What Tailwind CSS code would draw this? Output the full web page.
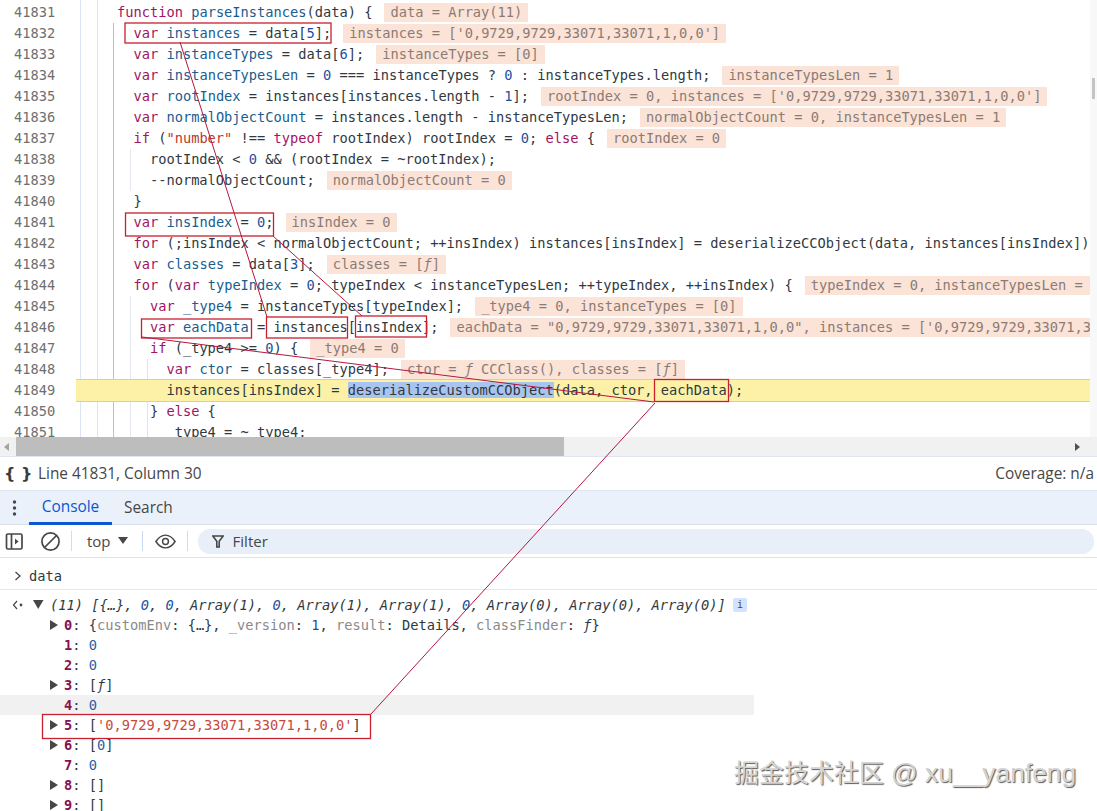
<!DOCTYPE html>
<html lang="en">
<head>
  <meta charset="UTF-8" />
  <title>DevTools Sources</title>
  <script src="https://cdn.jsdelivr.net/npm/@tailwindcss/browser@4"></script>
</head>
<body class="bg-white">
<div class="relative w-[1097px] h-[811px] overflow-hidden font-['Open_Sans','Noto_Sans',sans-serif]">

  <!-- Source pane -->
  <div class="relative h-[437px] overflow-hidden pr-[7px] pt-[2px] font-['DejaVu_Sans_Mono',monospace] text-[13.7px] text-[#303942]">
    <!-- indent guides -->
    <div class="absolute left-[80px] top-0 bottom-0 w-px bg-[#dbe5f5]"></div>
    <div class="absolute left-[97px] top-0 bottom-0 w-px bg-[#dbe5f5]"></div>
    <div class="absolute left-[113px] top-[23px] bottom-0 w-px bg-[#a9c2ea]"></div>
    <div class="absolute left-[130px] top-[149px] h-[42px] w-px bg-[#e3e8f0]"></div>
    <div class="absolute left-[130px] top-[296px] bottom-0 w-px bg-[#e3e8f0]"></div>
    <div class="absolute left-[147px] top-[359px] bottom-0 w-px bg-[#dbe5f5]"></div>

    <div class="relative flex h-[21px] leading-[21px]"><div class="w-[76px] shrink-0 pl-[14px] text-[#6f6f6f]">41831</div><div class="pl-[8px] whitespace-pre">    <span class="text-[#a1145f]">function</span> <span class="text-[#1a5d90]">parseInstances</span>(data) {<span class="inline-block ml-3 px-[6px] h-[19px] leading-[19px] bg-[#fce3d7] text-[#8b7b74]">data = Array(11)</span></div></div>
    <div class="relative flex h-[21px] leading-[21px]"><div class="w-[76px] shrink-0 pl-[14px] text-[#6f6f6f]">41832</div><div class="pl-[8px] whitespace-pre">      <span class="text-[#a1145f]">var</span> <span class="text-[#1a5d90]">instances</span> = data[<span class="text-[#1c4fa0]">5</span>];<span class="inline-block ml-3 px-[6px] h-[19px] leading-[19px] bg-[#fce3d7] text-[#8b7b74]">instances = ['0,9729,9729,33071,33071,1,0,0']</span></div></div>
    <div class="relative flex h-[21px] leading-[21px]"><div class="w-[76px] shrink-0 pl-[14px] text-[#6f6f6f]">41833</div><div class="pl-[8px] whitespace-pre">      <span class="text-[#a1145f]">var</span> <span class="text-[#1a5d90]">instanceTypes</span> = data[<span class="text-[#1c4fa0]">6</span>];<span class="inline-block ml-3 px-[6px] h-[19px] leading-[19px] bg-[#fce3d7] text-[#8b7b74]">instanceTypes = [0]</span></div></div>
    <div class="relative flex h-[21px] leading-[21px]"><div class="w-[76px] shrink-0 pl-[14px] text-[#6f6f6f]">41834</div><div class="pl-[8px] whitespace-pre">      <span class="text-[#a1145f]">var</span> <span class="text-[#1a5d90]">instanceTypesLen</span> = <span class="text-[#1c4fa0]">0</span> === instanceTypes ? <span class="text-[#1c4fa0]">0</span> : instanceTypes.length;<span class="inline-block ml-3 px-[6px] h-[19px] leading-[19px] bg-[#fce3d7] text-[#8b7b74]">instanceTypesLen = 1</span></div></div>
    <div class="relative flex h-[21px] leading-[21px]"><div class="w-[76px] shrink-0 pl-[14px] text-[#6f6f6f]">41835</div><div class="pl-[8px] whitespace-pre">      <span class="text-[#a1145f]">var</span> <span class="text-[#1a5d90]">rootIndex</span> = instances[instances.length - <span class="text-[#1c4fa0]">1</span>];<span class="inline-block ml-3 px-[6px] h-[19px] leading-[19px] bg-[#fce3d7] text-[#8b7b74]">rootIndex = 0, instances = ['0,9729,9729,33071,33071,1,0,0']</span></div></div>
    <div class="relative flex h-[21px] leading-[21px]"><div class="w-[76px] shrink-0 pl-[14px] text-[#6f6f6f]">41836</div><div class="pl-[8px] whitespace-pre">      <span class="text-[#a1145f]">var</span> <span class="text-[#1a5d90]">normalObjectCount</span> = instances.length - instanceTypesLen;<span class="inline-block ml-3 px-[6px] h-[19px] leading-[19px] bg-[#fce3d7] text-[#8b7b74]">normalObjectCount = 0, instanceTypesLen = 1</span></div></div>
    <div class="relative flex h-[21px] leading-[21px]"><div class="w-[76px] shrink-0 pl-[14px] text-[#6f6f6f]">41837</div><div class="pl-[8px] whitespace-pre">      <span class="text-[#a1145f]">if</span> (<span class="text-[#b93a2b]">"number"</span> !== <span class="text-[#a1145f]">typeof</span> rootIndex) rootIndex = <span class="text-[#1c4fa0]">0</span>; <span class="text-[#a1145f]">else</span> {<span class="inline-block ml-3 px-[6px] h-[19px] leading-[19px] bg-[#fce3d7] text-[#8b7b74]">rootIndex = 0</span></div></div>
    <div class="relative flex h-[21px] leading-[21px]"><div class="w-[76px] shrink-0 pl-[14px] text-[#6f6f6f]">41838</div><div class="pl-[8px] whitespace-pre">        rootIndex &lt; <span class="text-[#1c4fa0]">0</span> &amp;&amp; (rootIndex = ~rootIndex);</div></div>
    <div class="relative flex h-[21px] leading-[21px]"><div class="w-[76px] shrink-0 pl-[14px] text-[#6f6f6f]">41839</div><div class="pl-[8px] whitespace-pre">        --normalObjectCount;<span class="inline-block ml-3 px-[6px] h-[19px] leading-[19px] bg-[#fce3d7] text-[#8b7b74]">normalObjectCount = 0</span></div></div>
    <div class="relative flex h-[21px] leading-[21px]"><div class="w-[76px] shrink-0 pl-[14px] text-[#6f6f6f]">41840</div><div class="pl-[8px] whitespace-pre">      }</div></div>
    <div class="relative flex h-[21px] leading-[21px]"><div class="w-[76px] shrink-0 pl-[14px] text-[#6f6f6f]">41841</div><div class="pl-[8px] whitespace-pre">      <span class="text-[#a1145f]">var</span> <span class="text-[#1a5d90]">insIndex</span> = <span class="text-[#1c4fa0]">0</span>;<span class="inline-block ml-3 px-[6px] h-[19px] leading-[19px] bg-[#fce3d7] text-[#8b7b74]">insIndex = 0</span></div></div>
    <div class="relative flex h-[21px] leading-[21px]"><div class="w-[76px] shrink-0 pl-[14px] text-[#6f6f6f]">41842</div><div class="pl-[8px] whitespace-pre">      <span class="text-[#a1145f]">for</span> (;insIndex &lt; normalObjectCount; ++insIndex) instances[insIndex] = deserializeCCObject(data, instances[insIndex]);</div></div>
    <div class="relative flex h-[21px] leading-[21px]"><div class="w-[76px] shrink-0 pl-[14px] text-[#6f6f6f]">41843</div><div class="pl-[8px] whitespace-pre">      <span class="text-[#a1145f]">var</span> <span class="text-[#1a5d90]">classes</span> = data[<span class="text-[#1c4fa0]">3</span>];<span class="inline-block ml-3 px-[6px] h-[19px] leading-[19px] bg-[#fce3d7] text-[#8b7b74]">classes = [<i>ƒ</i>]</span></div></div>
    <div class="relative flex h-[21px] leading-[21px]"><div class="w-[76px] shrink-0 pl-[14px] text-[#6f6f6f]">41844</div><div class="pl-[8px] whitespace-pre">      <span class="text-[#a1145f]">for</span> (<span class="text-[#a1145f]">var</span> <span class="text-[#1a5d90]">typeIndex</span> = <span class="text-[#1c4fa0]">0</span>; typeIndex &lt; instanceTypesLen; ++typeIndex, ++insIndex) {<span class="inline-block ml-3 px-[6px] h-[19px] leading-[19px] bg-[#fce3d7] text-[#8b7b74]">typeIndex = 0, instanceTypesLen = 1</span></div></div>
    <div class="relative flex h-[21px] leading-[21px]"><div class="w-[76px] shrink-0 pl-[14px] text-[#6f6f6f]">41845</div><div class="pl-[8px] whitespace-pre">        <span class="text-[#a1145f]">var</span> <span class="text-[#1a5d90]">_type4</span> = instanceTypes[typeIndex];<span class="inline-block ml-3 px-[6px] h-[19px] leading-[19px] bg-[#fce3d7] text-[#8b7b74]">_type4 = 0, instanceTypes = [0]</span></div></div>
    <div class="relative flex h-[21px] leading-[21px]"><div class="w-[76px] shrink-0 pl-[14px] text-[#6f6f6f]">41846</div><div class="pl-[8px] whitespace-pre">        <span class="text-[#a1145f]">var</span> <span class="text-[#1a5d90]">eachData</span> = instances[insIndex];<span class="inline-block ml-3 px-[6px] h-[19px] leading-[19px] bg-[#fce3d7] text-[#8b7b74]">eachData = "0,9729,9729,33071,33071,1,0,0", instances = ['0,9729,9729,33071,33071,1,0,0']</span></div></div>
    <div class="relative flex h-[21px] leading-[21px]"><div class="w-[76px] shrink-0 pl-[14px] text-[#6f6f6f]">41847</div><div class="pl-[8px] whitespace-pre">        <span class="text-[#a1145f]">if</span> (_type4 &gt;= <span class="text-[#1c4fa0]">0</span>) {<span class="inline-block ml-3 px-[6px] h-[19px] leading-[19px] bg-[#fce3d7] text-[#8b7b74]">_type4 = 0</span></div></div>
    <div class="relative flex h-[21px] leading-[21px]"><div class="w-[76px] shrink-0 pl-[14px] text-[#6f6f6f]">41848</div><div class="pl-[8px] whitespace-pre">          <span class="text-[#a1145f]">var</span> <span class="text-[#1a5d90]">ctor</span> = classes[_type4];<span class="inline-block ml-3 px-[6px] h-[19px] leading-[19px] bg-[#fce3d7] text-[#8b7b74]">ctor = <i>ƒ</i> CCClass(), classes = [<i>ƒ</i>]</span></div></div>
    <div class="relative flex h-[21px] leading-[21px]"><div class="w-[76px] shrink-0 pl-[14px] text-[#6f6f6f]">41849</div><div class="flex-1 -mt-px h-[23px] pl-[8px] whitespace-pre bg-[#fdf1a8] border-y border-[#f3d34a]">          instances[insIndex] = <span class="bg-[#a9c5ef]">deserializeCustomCCObject</span>(data, ctor, eachData);</div></div>
    <div class="relative flex h-[21px] leading-[21px]"><div class="w-[76px] shrink-0 pl-[14px] text-[#6f6f6f]">41850</div><div class="pl-[8px] whitespace-pre">        } <span class="text-[#a1145f]">else</span> {</div></div>
    <div class="relative flex h-[21px] leading-[21px]"><div class="w-[76px] shrink-0 pl-[14px] text-[#6f6f6f]">41851</div><div class="pl-[8px] whitespace-pre">          _type4 = ~_type4;</div></div>

    <!-- vertical scrollbar -->
    <div class="absolute right-0 top-0 bottom-0 w-[7px] bg-[#f8f8f8]"></div>
    <div class="absolute right-[2px] top-[78px] h-[21px] w-[3px] bg-[#c4c4c4]"></div>
  </div>

  <!-- Horizontal scrollbar -->
  <div class="flex items-center h-[19px] bg-[#f1f1f1]">
    <svg class="ml-[2px] w-[14px] h-[18px]" viewBox="0 0 14 18"><path d="M7 5v8L2 9z" fill="#a3a3a3"/></svg>
    <div class="w-[548px] h-full bg-[#bdbdbd]"></div>
    <div class="flex-1"></div>
    <svg class="mr-[11px] w-[14px] h-[18px]" viewBox="0 0 14 18"><path d="M3 5v8l5-4z" fill="#505050"/></svg>
  </div>

  <!-- Status bar -->
  <div class="flex items-center h-[35px] border-y border-[#dfe5f1] text-[15.4px] text-[#474747]">
    <span class="ml-[4px] w-[34px] font-bold text-[#3c3c3c] text-[16px] font-['DejaVu_Sans',sans-serif]">{ }</span>
    <span>Line 41831, Column 30</span>
    <span class="ml-auto mr-[3px]">Coverage: n/a</span>
  </div>

  <!-- Drawer tabs -->
  <div class="flex h-[34px] bg-[#eaf1fa] border-b border-[#d9e0ec] text-[15.400px]">
    <svg class="w-[29px] h-[33px]" viewBox="0 0 29 33"><circle cx="14.500" cy="11" r="1.700" fill="#474747"/><circle cx="14.500" cy="17" r="1.700" fill="#474747"/><circle cx="14.500" cy="23" r="1.700" fill="#474747"/></svg>
    <div class="w-[83px] h-[34px] flex items-center justify-center text-[#0b57d0] border-b-[3px] border-[#0b57d0]">Console</div>
    <div class="ml-[12px] flex items-center text-[#474747]">Search</div>
  </div>

  <!-- Console toolbar -->
  <div class="flex items-center h-[33px] border-b border-[#dfe3ea] text-[15px] text-[#474747]">
    <svg class="ml-[5px] w-[19px] h-[19px]" viewBox="0 0 19 19" fill="none" stroke="#474747" stroke-width="1.700"><rect x="1.500" y="2" width="15.500" height="15" rx="1.500"/><path d="M6.500 2v15"/><path d="M10 6.500v6l3.500-3z" fill="#474747" stroke="none"/></svg>
    <svg class="ml-[16px] w-[21px] h-[21px]" viewBox="0 0 21 21" fill="none" stroke="#474747" stroke-width="1.700"><circle cx="10.500" cy="10.500" r="8.600"/><path d="M4.500 16.500l12-12"/></svg>
    <div class="ml-[10px] w-px h-[20px] bg-[#d5dbe5]"></div>
    <span class="ml-[15px]">top</span>
    <svg class="ml-[7px] w-[10px] h-[8px]" viewBox="0 0 10 8"><path d="M0 0h10L5 7z" fill="#474747"/></svg>
    <div class="ml-[14px] w-px h-[20px] bg-[#c7d9f3]"></div>
    <svg class="ml-[12px] w-[21px] h-[15px]" viewBox="0 0 23 16" fill="none" stroke="#474747" stroke-width="1.600"><path d="M1 8c3-4.600 6.500-7 10.500-7S19 3.400 22 8c-3 4.600-6.500 7-10.500 7S4 12.600 1 8z"/><circle cx="11.500" cy="8" r="3.200"/></svg>
    <div class="ml-[11px] w-px h-[20px] bg-[#d5dbe5]"></div>
    <div class="ml-[10px] flex items-center w-[896px] h-[25px] rounded-[12px] bg-[#e9eff8]">
      <svg class="ml-[14px] w-[12px] h-[13px]" viewBox="0 0 12 13" fill="none" stroke="#474747" stroke-width="1.600"><path d="M.8 1h10.400L7.200 6.200V12H4.800V6.200z"/></svg>
      <span class="ml-[9px]">Filter</span>
    </div>
  </div>

  <!-- Console output -->
  <div class="font-['DejaVu_Sans_Mono',monospace] text-[13.7px] leading-[20px] text-[#303942]">
    <div class="flex items-center h-[32px] pt-[5px] border-b border-[#e3e6ec] whitespace-pre">
      <svg class="ml-[14px] w-[8px] h-[10px]" viewBox="0 0 8 10" fill="none" stroke="#474747" stroke-width="1.300"><path d="M1.500 1l4.500 4-4.500 4"/></svg>
      <span class="ml-[7px]">data</span>
    </div>
    <div class="relative mt-[5px] h-[20px] whitespace-pre">
      <svg class="absolute left-[12px] top-[5px] w-[11px] h-[10px]" viewBox="0 0 11 10" fill="none" stroke="#474747" stroke-width="1.200"><path d="M5 1L1.500 5 5 9"/><circle cx="9" cy="5" r=".8" fill="#474747"/></svg>
      <svg class="absolute left-[33px] top-[5px] w-[11px] h-[9px]" viewBox="0 0 11 9"><path d="M0 0h10.500L5.200 9z" fill="#474747"/></svg>
      <span class="absolute left-[50px] top-0 italic">(11) [{…}, <span class="text-[#1c4fa0]">0</span>, <span class="text-[#1c4fa0]">0</span>, Array(1), <span class="text-[#1c4fa0]">0</span>, Array(1), Array(1), <span class="text-[#1c4fa0]">0</span>, Array(0), Array(0), Array(0)]</span>
      <span class="absolute left-[733px] top-[3px] w-[14px] h-[14px] rounded-[2px] bg-[#d3e3fd] text-[#474747] text-[10px] leading-[14px] text-center">i</span>
    </div>
    <div class="flex h-[20px] pl-[50px] whitespace-pre"><svg class="w-[8px] h-[20px] mr-[6px]" viewBox="0 0 8 20"><path d="M0 5l8 5-8 5z" fill="#474747"/></svg><span><b class="text-[#87104f]">0</b>: {<span class="text-[#8a8a8a]">customEnv</span>: {…}, <span class="text-[#8a8a8a]">_version</span>: <span class="text-[#1c4fa0]">1</span>, <span class="text-[#8a8a8a]">result</span>: Details, <span class="text-[#8a8a8a]">classFinder</span>: <i>ƒ</i>}</span></div>
    <div class="flex h-[20px] pl-[64px] whitespace-pre"><span><b class="text-[#87104f]">1</b>: <span class="text-[#1c5fa8]">0</span></span></div>
    <div class="flex h-[20px] pl-[64px] whitespace-pre"><span><b class="text-[#87104f]">2</b>: <span class="text-[#1c5fa8]">0</span></span></div>
    <div class="flex h-[20px] pl-[50px] whitespace-pre"><svg class="w-[8px] h-[20px] mr-[6px]" viewBox="0 0 8 20"><path d="M0 5l8 5-8 5z" fill="#474747"/></svg><span><b class="text-[#87104f]">3</b>: [<i>ƒ</i>]</span></div>
    <div class="flex h-[20px] w-[754px] pl-[64px] whitespace-pre bg-[#f1f1f1]"><span><b class="text-[#87104f]">4</b>: <span class="text-[#1c5fa8]">0</span></span></div>
    <div class="flex h-[20px] pl-[50px] whitespace-pre"><svg class="w-[8px] h-[20px] mr-[6px]" viewBox="0 0 8 20"><path d="M0 5l8 5-8 5z" fill="#474747"/></svg><span><b class="text-[#87104f]">5</b>: [<span class="text-[#c8483a]">'0,9729,9729,33071,33071,1,0,0'</span>]</span></div>
    <div class="flex h-[20px] pl-[50px] whitespace-pre"><svg class="w-[8px] h-[20px] mr-[6px]" viewBox="0 0 8 20"><path d="M0 5l8 5-8 5z" fill="#474747"/></svg><span><b class="text-[#87104f]">6</b>: [<span class="text-[#1c5fa8]">0</span>]</span></div>
    <div class="flex h-[20px] pl-[64px] whitespace-pre"><span><b class="text-[#87104f]">7</b>: <span class="text-[#1c5fa8]">0</span></span></div>
    <div class="flex h-[20px] pl-[50px] whitespace-pre"><svg class="w-[8px] h-[20px] mr-[6px]" viewBox="0 0 8 20"><path d="M0 5l8 5-8 5z" fill="#474747"/></svg><span><b class="text-[#87104f]">8</b>: []</span></div>
    <div class="flex h-[20px] pl-[50px] whitespace-pre"><svg class="w-[8px] h-[20px] mr-[6px]" viewBox="0 0 8 20"><path d="M0 5l8 5-8 5z" fill="#474747"/></svg><span><b class="text-[#87104f]">9</b>: []</span></div>
  </div>

  <!-- Red annotations drawn over the screenshot -->
  <svg class="absolute left-0 top-0 w-[1097px] h-[811px] pointer-events-none" viewBox="0 0 1097 811" fill="none">
    <g stroke="#c8202f" stroke-width="1.300">
      <rect x="125" y="23" width="206" height="20"/>
      <rect x="125.500" y="213" width="148" height="23"/>
      <rect x="141.500" y="319" width="110" height="19"/>
      <rect x="266.500" y="317" width="81" height="21"/>
      <rect x="355.500" y="316" width="71" height="21"/>
      <rect x="654.500" y="379.500" width="74" height="22"/>
      <rect x="42.500" y="714.500" width="328" height="24"/>
    </g>
    <g stroke="#b5173f" stroke-width="1">
      <path d="M180 42L267 317"/>
      <path d="M273 236L362 316"/>
      <path d="M142 337L654 402"/>
      <path d="M655 403L371 714"/>
    </g>
  </svg>

  <!-- Watermark -->
  <div class="absolute left-[734px] top-[756px] text-[25px] leading-[34px] whitespace-nowrap text-[#d4d4d4] [text-shadow:1px_1px_1px_#5a5a5a] font-['Liberation_Sans','Noto_Sans_CJK_SC',sans-serif]">掘金技术社区 <span class="text-[26.400px]">@ xu__yanfeng</span></div>
</div>
</body>
</html>
